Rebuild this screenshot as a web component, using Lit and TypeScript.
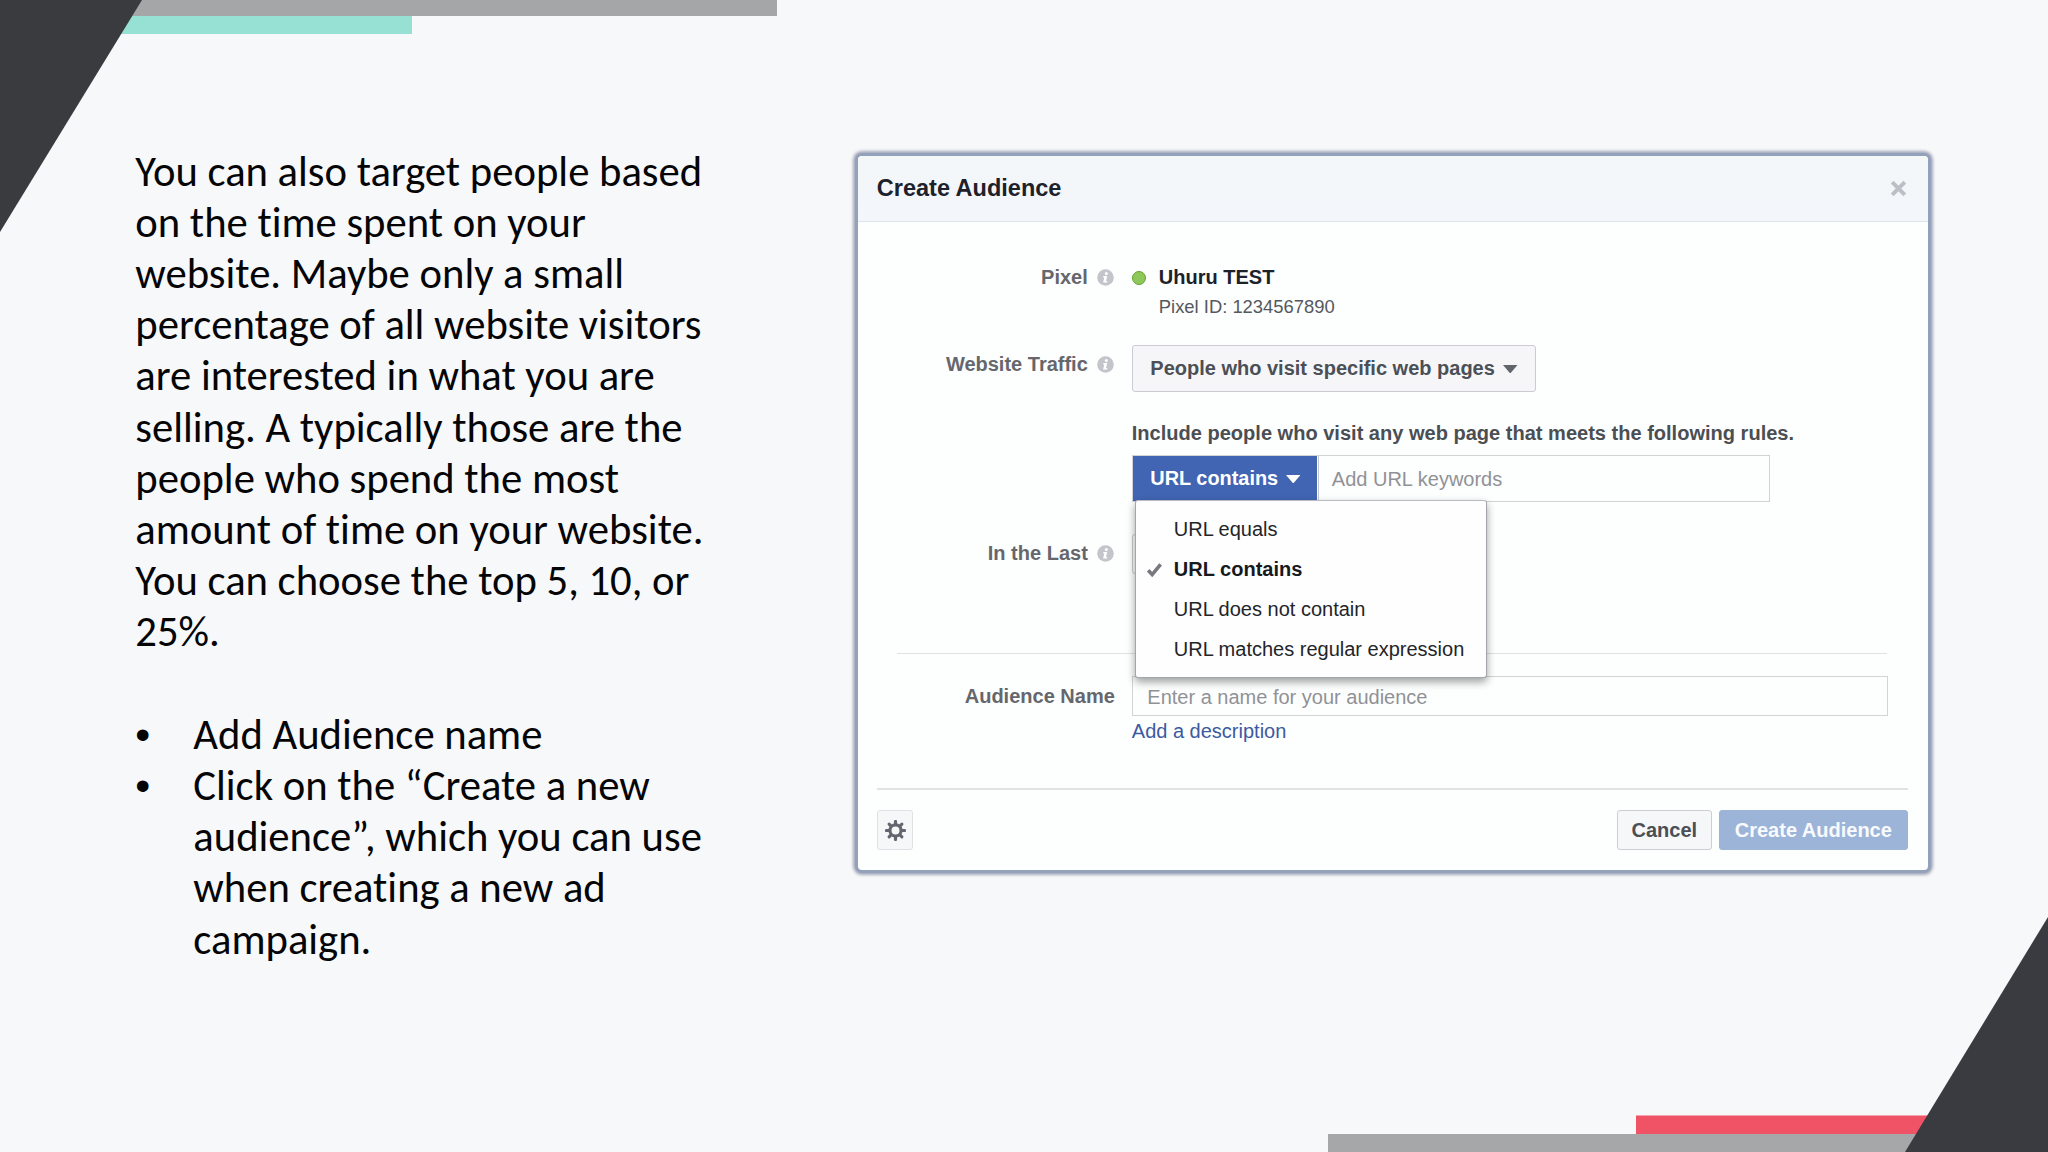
import { LitElement, html, css, svg } from "lit";
import { customElement, property } from "lit/decorators.js";
import { classMap } from "lit/directives/class-map.js";

const INTRO = [
  "You can also target people based",
  "on the time spent on your",
  "website. Maybe only a small",
  "percentage of all website visitors",
  "are interested in what you are",
  "selling. A typically those are the",
  "people who spend the most",
  "amount of time on your website.",
  "You can choose the top 5, 10, or",
  "25%.",
];

const STEPS = [
  ["Add Audience name"],
  ["Click on the “Create a new", "audience”, which you can use", "when creating a new ad", "campaign."],
];

const RULES = ["URL equals", "URL contains", "URL does not contain", "URL matches regular expression"];
const SELECTED_RULE = "URL contains";

const infoIcon = html`<svg class="info" viewBox="0 0 17 17">
  <circle cx="8.5" cy="8.5" r="8.3" fill="#c3c5cb" />
  <circle cx="9.3" cy="4.6" r="1.5" fill="#fff" />
  <path d="M6.3 7h3.9l-1.2 5h1.2v1.4H6.1l1.2-5H6.3z" fill="#fff" />
</svg>`;

const caret = (fill: string) => html`<svg class="caret" viewBox="0 0 14 8" preserveAspectRatio="none">
  <path d="M0 0h14L7 8z" fill=${fill} />
</svg>`;

const gearIcon = html`<svg class="gear-icon" viewBox="-10 -10 20 20">
  <circle r="5.3" fill="none" stroke="#63666f" stroke-width="3" />
  ${[0, 45, 90, 135, 180, 225, 270, 315].map(
    (a) => svg`<path d="M0 -6.3V-8.6" stroke="#63666f" stroke-width="3" stroke-linecap="round" transform="rotate(${a})" />`
  )}
</svg>`;

@customElement("slide-copy")
export class SlideCopy extends LitElement {
  static styles = css`
    :host {
      display: block;
      font: 42.67px/51.2px Carlito, Calibri, Lato, sans-serif;
      font-variant-ligatures: none;
      color: #050506;
      white-space: nowrap;
    }
    p, ul { margin: 0; padding: 0; }
    ul { list-style: none; margin-top: 51.2px; }
    li { display: grid; grid-template-columns: 58px 1fr; }
    .line { display: block; }
    .mark { font-family: "Liberation Sans", Arial, sans-serif; height: 51.2px; }
  `;
  render() {
    return html`
      <p>${INTRO.map((l) => html`<span class="line">${l}</span>`)}</p>
      <ul>
        ${STEPS.map(
          (s) => html`<li>
            <span class="mark">•</span>
            <span>${s.map((l) => html`<span class="line">${l}</span>`)}</span>
          </li>`
        )}
      </ul>
    `;
  }
}

@customElement("rule-menu")
export class RuleMenu extends LitElement {
  @property() selected = "";
  static styles = css`
    :host {
      display: block;
      box-sizing: border-box;
      width: 352px;
      height: 178.5px;
      padding: 8px 0;
      background: #fefefe;
      border: 1px solid #a3a5aa;
      border-top-color: #b9bbc0;
      border-radius: 3px;
      box-shadow: 0 4px 9px rgba(0, 0, 0, 0.38);
    }
    .item {
      display: grid;
      grid-template-columns: 14px 1fr;
      column-gap: 12.5px;
      align-items: center;
      height: 40.2px;
      padding-left: 11.5px;
      color: #232529;
      white-space: nowrap;
    }
    .on { font-weight: bold; color: #17191d; }
    .tick { width: 15px; height: 14px; margin-top: 3px; overflow: visible; }
  `;
  render() {
    return html`${RULES.map((r) => {
      const on = r === this.selected;
      return html`<div class=${classMap({ item: true, on })}>
        ${on
          ? html`<svg class="tick" viewBox="0 0 15 14">
              <path d="M1.2 7.2L5.2 11.6L13.6 1.4" fill="none" stroke="#77797f" stroke-width="3.6" />
            </svg>`
          : html`<span></span>`}
        <span>${r}</span>
      </div>`;
    })}`;
  }
}

@customElement("audience-dialog")
export class AudienceDialog extends LitElement {
  static styles = css`
    :host {
      display: flex;
      flex-direction: column;
      box-sizing: border-box;
      width: 1070px;
      height: 714px;
      border-radius: 4px;
      background: #fdfefe;
      box-shadow: 0 0 0 3px #93a1ba, 0 0 3px 5px rgba(110, 116, 145, 0.6);
      font: 20px/24px "Liberation Sans", Helvetica, Arial, sans-serif;
      color: #4f5257;
      white-space: nowrap;
    }
    .head {
      display: flex;
      justify-content: space-between;
      align-items: center;
      box-sizing: border-box;
      height: 66px;
      padding: 0 21px 0 19px;
      border-bottom: 1.5px solid #dde4ec;
      border-radius: 4px 4px 0 0;
      background: linear-gradient(#f4f7f8, #f3f6fb);
    }
    .title { font-size: 23.5px; font-weight: bold; color: #1d2129; margin-bottom: 1px; }
    .close { width: 17px; height: 17px; margin-bottom: 0; }
    .row { display: grid; grid-template-columns: 257px 1fr; column-gap: 17px; }
    .label {
      display: flex;
      justify-content: flex-end;
      align-items: flex-start;
      gap: 9px;
      font-weight: bold;
      color: #65676c;
      height: 24px;
    }
    .info { width: 17px; height: 17px; margin: 4px 1px 0 0; }
    .pixel-row { margin-top: 43px; height: 80px; }
    .pixel { display: grid; grid-template-columns: 13px 1fr; column-gap: 14px; align-content: start; }
    .dot {
      box-sizing: border-box;
      width: 14px;
      height: 14px;
      margin-top: 6px;
      border: 1.5px solid #62a32c;
      border-radius: 50%;
      background: #8fc85a;
    }
    .pixel-name { font-weight: bold; font-size: 20px; color: #1d2129; }
    .pixel-id { grid-column: 2; font-size: 18.4px; margin-top: 6px; color: #55585d; }
    .traffic-row { height: 46px; }
    .traffic-row .label { padding-top: 6.5px; }
    .select {
      display: flex;
      align-items: center;
      gap: 8.5px;
      box-sizing: border-box;
      width: 404.5px;
      height: 46.5px;
      padding: 0 0 1px 17.5px;
      border: 1.5px solid #cbccd1;
      border-radius: 3px;
      background: #f6f6f9;
      font-weight: bold;
      color: #4b4f56;
    }
    .caret { width: 14.5px; height: 8.5px; margin-top: 2px; }
    .rules-row { margin-top: 30px; }
    .rules-title { font-weight: bold; font-size: 20.05px; color: #4b4e53; }
    .rule {
      position: relative;
      display: flex;
      box-sizing: border-box;
      width: 638.5px;
      height: 46.5px;
      margin-top: 10px;
      border: 1.5px solid #d0d2d6;
    }
    .rule-type {
      display: flex;
      align-items: center;
      gap: 7.5px;
      width: 167px;
      padding: 0 0 0 17.5px;
      background: #4165b3;
      font-weight: bold;
      font-size: 19.9px;
      color: #fff;
    }
    .rule-type .caret { margin-top: 1px; }
    .rule-input {
      flex: 1;
      display: flex;
      align-items: center;
      margin-left: 1px;
      padding: 2px 0 0 12.5px;
      border-left: 1px solid #c4c6ca;
      color: #909296;
    }
    rule-menu { position: absolute; left: 2px; top: 43.5px; z-index: 2; }
    .last-row { margin-top: 32px; height: 40px; }
    .last-row .label { padding-top: 7.5px; }
    .last-box { box-sizing: border-box; width: 240px; height: 40px; border: 1.5px solid #c9cbcf; border-radius: 3px; }
    .rule-line { margin: 79px 40.5px 0 39px; border-top: 1px solid #dfe1e5; }
    .name-row { margin-top: 22.5px; }
    .name-row .label { padding-top: 8px; }
    .name-input {
      display: flex;
      align-items: center;
      box-sizing: border-box;
      width: 756px;
      height: 40px;
      padding: 1px 0 0 14.5px;
      border: 1.5px solid #d2d4d7;
      color: #909296;
    }
    .link { margin-top: 2.5px; color: #3c5aa0; }
    .foot {
      display: flex;
      align-items: flex-start;
      box-sizing: border-box;
      margin: auto 20px 0 19px;
      height: 82px;
      padding-top: 20px;
      border-top: 2px solid #e1e2e4;
    }
    .btn {
      display: flex;
      align-items: center;
      justify-content: center;
      box-sizing: border-box;
      height: 40px;
      border: 1.5px solid #cdced3;
      border-radius: 3px;
      background: #f6f7f9;
      font-weight: bold;
      font-size: 20px;
      color: #4b4f56;
    }
    .gear { width: 36.5px; border-color: #e0e1e4; margin-right: auto; }
    .gear-icon { width: 21px; height: 21px; }
    .cancel { width: 95px; margin-right: 7px; }
    .create { width: 189px; border-color: #9cb4d8; background: #9cb4d8; color: #f8fafd; }
  `;
  render() {
    return html`
      <div class="head">
        <span class="title">Create Audience</span>
        <svg class="close" viewBox="0 0 17 17">
          <path d="M2.2 2.2L14.8 14.8M14.8 2.2L2.2 14.8" stroke="#bcbfc5" stroke-width="4" />
        </svg>
      </div>
      <div class="row pixel-row">
        <div class="label">Pixel ${infoIcon}</div>
        <div class="pixel">
          <span class="dot"></span>
          <span class="pixel-name">Uhuru TEST</span>
          <span class="pixel-id">Pixel ID: 1234567890</span>
        </div>
      </div>
      <div class="row traffic-row">
        <div class="label">Website Traffic ${infoIcon}</div>
        <div class="select">People who visit specific web pages ${caret("#62656b")}</div>
      </div>
      <div class="row rules-row">
        <span></span>
        <div>
          <div class="rules-title">Include people who visit any web page that meets the following rules.</div>
          <div class="rule">
            <div class="rule-type">URL contains ${caret("#fff")}</div>
            <div class="rule-input">Add URL keywords</div>
            <rule-menu .selected=${SELECTED_RULE}></rule-menu>
          </div>
        </div>
      </div>
      <div class="row last-row">
        <div class="label">In the Last ${infoIcon}</div>
        <div class="last-box"></div>
      </div>
      <div class="rule-line"></div>
      <div class="row name-row">
        <div class="label">Audience Name</div>
        <div>
          <div class="name-input">Enter a name for your audience</div>
          <div class="link">Add a description</div>
        </div>
      </div>
      <div class="foot">
        <div class="btn gear">${gearIcon}</div>
        <div class="btn cancel">Cancel</div>
        <div class="btn create">Create Audience</div>
      </div>
    `;
  }
}

@customElement("app-root")
export class AppRoot extends LitElement {
  static styles = css`
    :host { display: block; }
    .slide {
      position: relative;
      display: grid;
      grid-template-columns: 722.5px 1070px;
      align-items: start;
      box-sizing: border-box;
      width: 2048px;
      height: 1152px;
      padding: 0 0 0 135.3px;
      background: #f7f8fa;
      overflow: hidden;
    }
    .shapes { position: absolute; left: 0; top: 0; width: 2048px; height: 1152px; }
    slide-copy { margin-top: 145.6px; }
    audience-dialog { margin-top: 156px; }
  `;
  render() {
    return html`<main class="slide">
      <svg class="shapes" viewBox="0 0 2048 1152">
        <path d="M0 0H777V16H0z" fill="#a5a6a8" />
        <path d="M0 16H412V34H0z" fill="#96e1d3" />
        <path d="M0 0H142L0 232z" fill="#3a3b3f" />
        <path d="M1636 1115.5H2048V1134H1636z" fill="#f05365" />
        <path d="M1328 1134H2048V1152H1328z" fill="#a5a7a8" />
        <path d="M2048 917V1152H1905z" fill="#393b40" />
      </svg>
      <slide-copy></slide-copy>
      <audience-dialog></audience-dialog>
    </main>`;
  }
}
